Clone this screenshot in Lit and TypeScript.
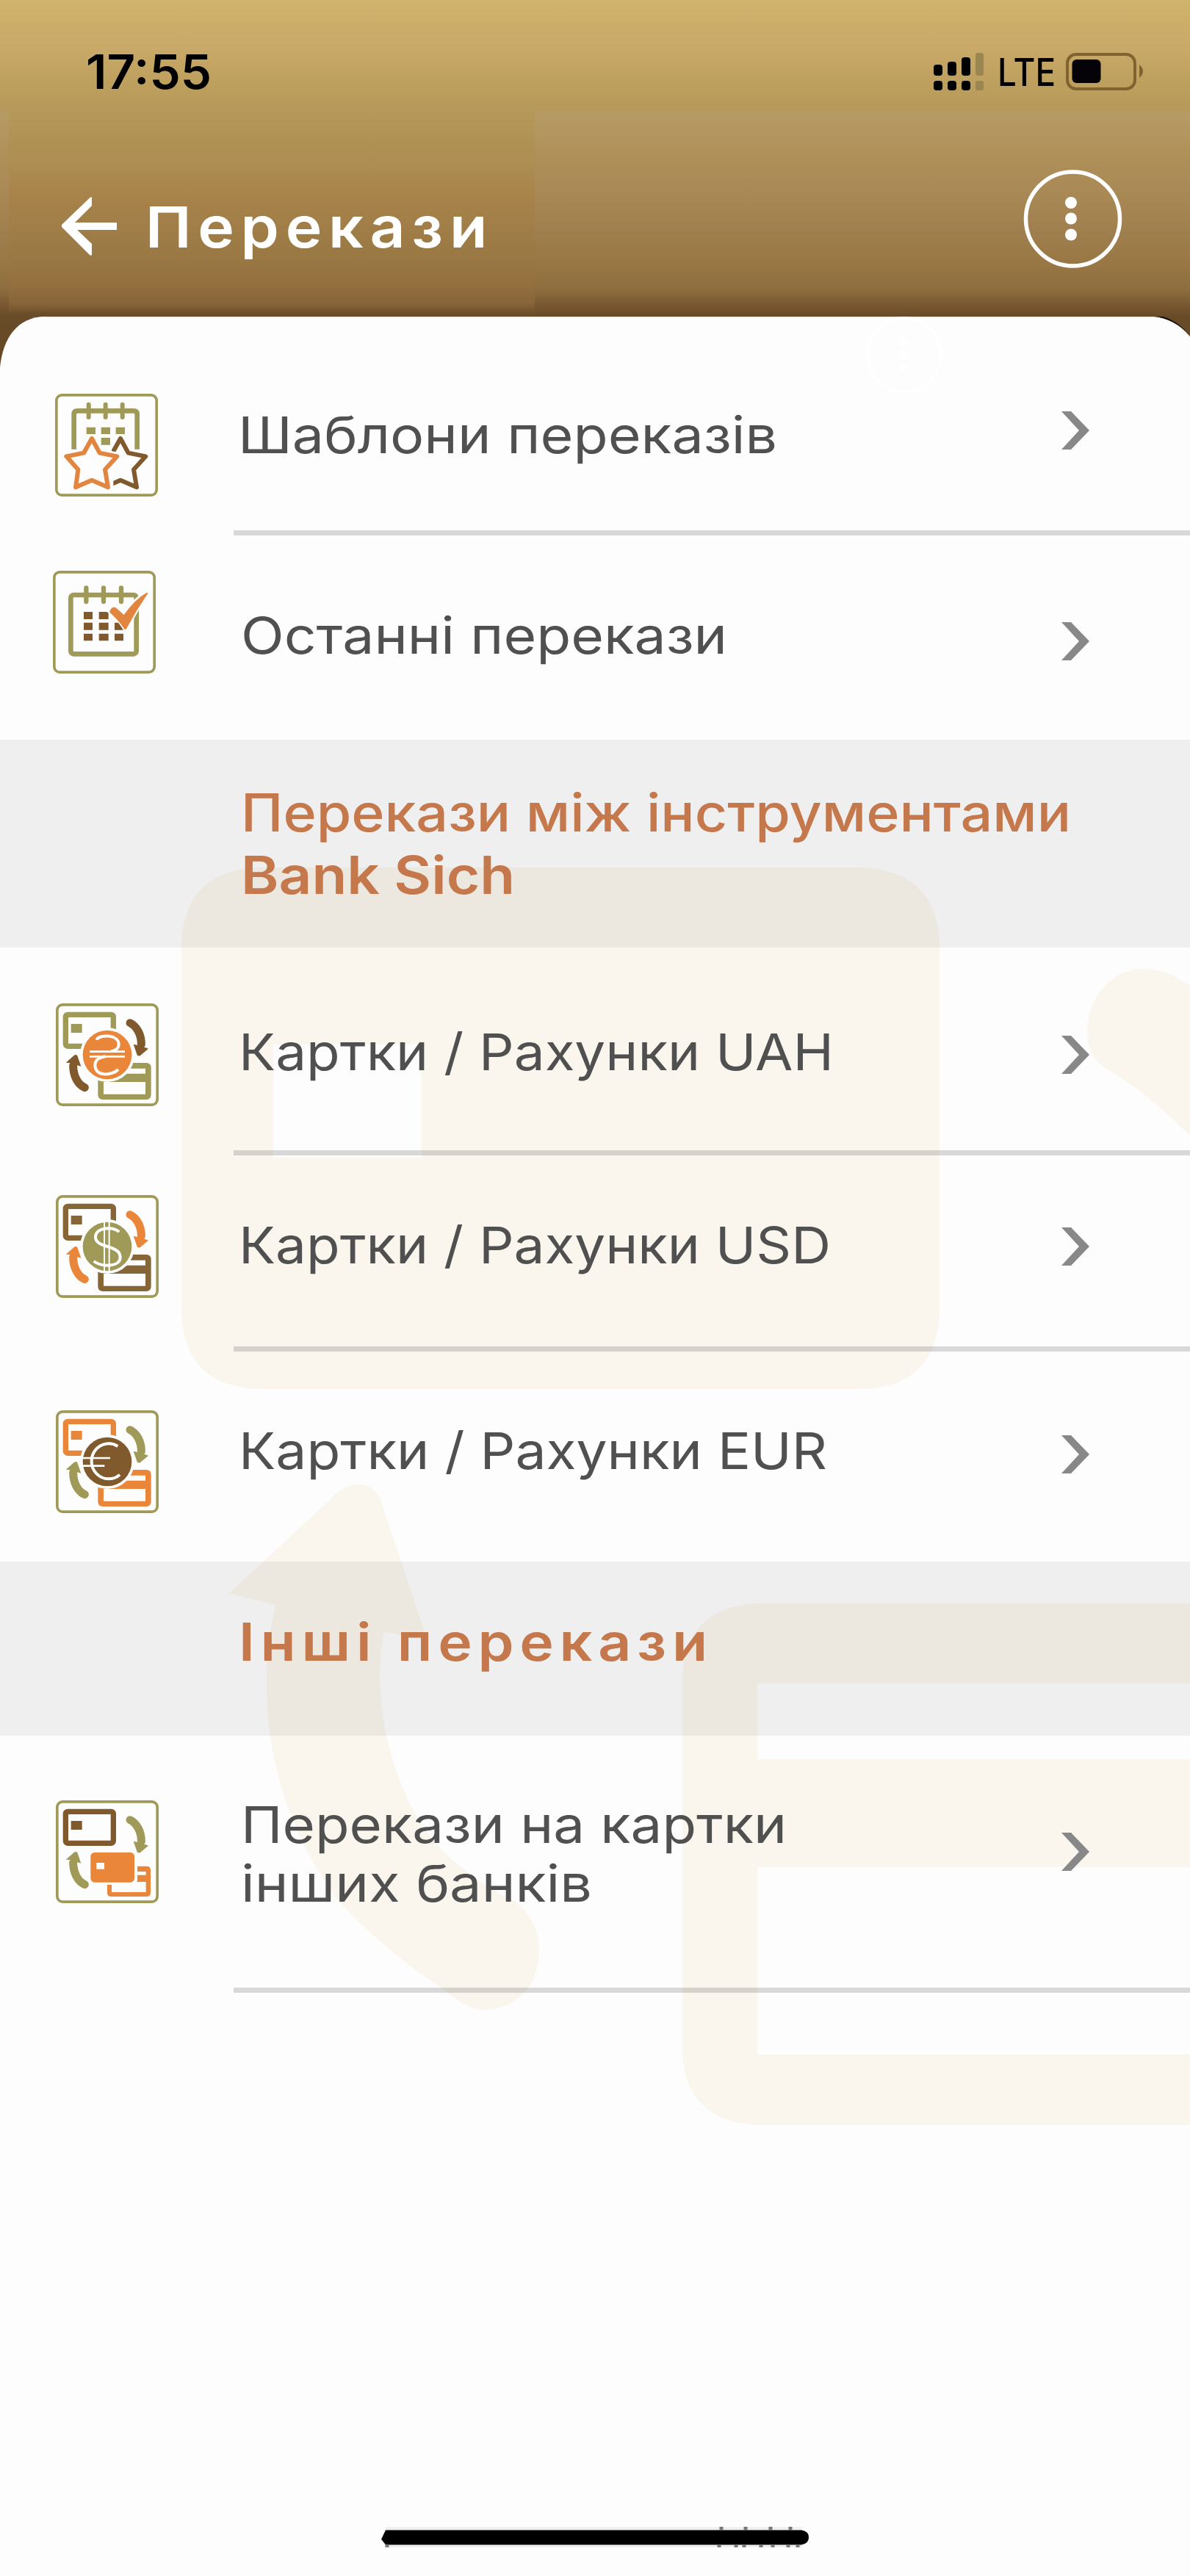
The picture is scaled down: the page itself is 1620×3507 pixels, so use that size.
import { LitElement, html, css, svg, nothing } from "lit";
import { customElement, property } from "lit/decorators.js";

const OLIVE = "#a09a58";
const BROWN = "#80592c";
const UMBER = "#866536";
const ORANGE = "#ea863a";
const PAPER = "#fdfdfd";

/** One line of text stretched horizontally to a known width. */
@customElement("fit-line")
export class FitLine extends LitElement {
  @property({ type: Number }) width = 0;
  static styles = css`
    :host { display: block; white-space: nowrap; }
    .t { display: inline-block; transform-origin: 0 50%; }
  `;
  updated() {
    const el = this.renderRoot.querySelector<HTMLElement>(".t")!;
    el.style.transform = "none";
    const w = el.getBoundingClientRect().width;
    if (w > 0 && this.width > 0) el.style.transform = `scaleX(${this.width / w})`;
  }
  render() {
    return html`<span class="t"><slot></slot></span>`;
  }
}

const frame = svg`<rect x="53.5" y="53.5" width="409" height="409" rx="22" fill="#fdfdfd" stroke=${OLIVE} stroke-width="11"/>`;

const topCard = (c: string) => svg`
  <rect x="88" y="94" width="195" height="129" rx="9" fill="none" stroke=${c} stroke-width="22"/>
  <rect x="110" y="132" width="45" height="36" fill=${c}/>`;

const lowCard = (c: string) => svg`
  <path fill=${c} fill-rule="evenodd" d="M240 291H417Q437 291 437 311V421Q437 441 417 441H240Q220 441 220 421V311Q220 291 240 291ZM243 314V335H414V314ZM243 369V419H414V369Z"/>`;

const arrows = (c: string) => svg`
  <g fill="none" stroke=${c} stroke-width="33" stroke-linecap="round"><path d="M351 128C378 141 398 176 397 216"/><path d="M166 392C138 380 119 344 119 302" /></g>
  <path fill=${c} d="M365 215L382 219L414 229L426 233L394 260Q386 266 380 259Z"/>
  <path fill=${c} d="M151 305L133 300L103 291L89 290L122 261Q131 255 136 262Z"/>`;

const coin = (c: string, mark: unknown) => svg`
  <circle cx="258" cy="258" r="111" fill=${PAPER}/>
  <circle cx="258" cy="258" r="100" fill=${c}/>${mark}`;

const hryvnia = svg`<g fill="none" stroke="#fff">
  <path stroke-width="12" d="M215 197C221 175 305 172 305 216C305 231 291 241 274 244"/>
  <path stroke-width="12" d="M250 265C221 270 208 280 208 300C208 350 278 343 303 318"/>
  <path stroke-width="8" d="M186 245H330M186 265H330"/></g>`;

const dollar = svg`<g fill="none" stroke="#fff">
  <path stroke-width="12" d="M307 198C278 176 210 178 210 220C210 266 311 250 311 302C311 343 236 343 203 318"/>
  <path stroke-width="6" d="M246 157V358M266 157V358"/></g>`;

const euro = svg`<g fill="none" stroke="#fff">
  <path stroke-width="12" d="M301 195A70 72 0 1 0 309 311"/>
  <path stroke-width="8" d="M158 243H270M158 275H247"/></g>`;

const exchange = (card: string, arr: string, disc: string, mark: unknown) => svg`
  ${frame}${topCard(card)}${lowCard(card)}${arrows(arr)}${coin(disc, mark)}`;

const STAR = "M195 231L227 290L298 304L249 358L261 430L195 401L129 430L139 358L91 304L162 290Z";

const icons: Record<string, { box: string; art: unknown }> = {
  templates: {
    box: "45 48 420 420",
    art: svg`
      <clipPath id="c"><path d="M276 0H460V460H283L283 340L276 300Z"/></clipPath>
      <rect x="50.5" y="53.5" width="409" height="409" rx="22" fill="#fdfdfd" stroke=${OLIVE} stroke-width="11"/>
      <path fill="none" stroke=${OLIVE} stroke-width="20" d="M122 275V132Q122 118 136 118H366Q380 118 380 132V275"/>
      <path stroke=${OLIVE} stroke-width="18" stroke-linecap="round" d="M182 92V144M251 92V144M320 92V144"/>
      <path fill=${OLIVE} d="M173 185h37v28h-37zM233 185h37v28h-37zM293 185h37v28h-37zM233 228h37v29h-37z"/>
      <g clip-path="url(#c)"><g transform="translate(117 0)" stroke-linejoin="round">
        <path d=${STAR} fill=${PAPER} stroke=${PAPER} stroke-width="34"/>
        <path d=${STAR} fill="none" stroke=${BROWN} stroke-width="18"/></g></g>
      <path d=${STAR} fill=${PAPER} stroke=${PAPER} stroke-width="34" stroke-linejoin="round"/>
      <path d=${STAR} fill="none" stroke="#e2853e" stroke-width="18" stroke-linejoin="round"/>`,
  },
  recent: {
    box: "36 771 420 420",
    art: svg`
      <rect x="41.5" y="776.5" width="409" height="409" rx="22" fill="#fdfdfd" stroke=${OLIVE} stroke-width="11"/>
      <rect x="109" y="870" width="268" height="241" rx="12" fill="none" stroke=${OLIVE} stroke-width="20"/>
      <path stroke=${OLIVE} stroke-width="19" stroke-linecap="round" d="M172 841V897M243 841V897M315 841V897"/>
      <path fill=${BROWN} d="M162 939h36v30h-36zM224 939h39v30h-39zM162 983h36v30h-36zM224 983h39v30h-39zM288 983h36v30h-36zM162 1028h36v29h-36zM224 1028h39v29h-39zM288 1028h36v29h-36z"/>
      <path stroke=${PAPER} stroke-width="18" fill=${PAPER} d="M268 936Q276 920 290 920L326 951Q372 888 422 860Q375 930 333 1011Q304 962 268 936Z"/>
      <path fill="#e2853e" d="M268 936Q276 917 292 921L326 951Q372 886 420 860Q426 861 422 866Q375 935 336 1008Q332 1014 327 1008Q304 974 270 943Q266 939 268 936Z"/>`,
  },
  uah: { box: "48 48 420 420", art: exchange(OLIVE, BROWN, ORANGE, hryvnia) },
  usd: { box: "48 48 420 420", art: exchange(UMBER, ORANGE, OLIVE, dollar) },
  eur: { box: "48 48 420 420", art: exchange(ORANGE, OLIVE, BROWN, euro) },
  banks: {
    box: "48 48 420 420",
    art: svg`${frame}${topCard(BROWN)}${arrows(OLIVE)}
      <path fill=${ORANGE} fill-rule="evenodd" d="M274 317H419Q435 317 435 333V425Q435 441 419 441H274Q258 441 258 425V333Q258 317 274 317ZM276 339V353H416V339ZM276 381V423H416V381Z"/>
      <rect x="179" y="250" width="202" height="143" rx="20" fill=${PAPER}/>
      <rect x="190" y="261" width="179" height="122" rx="16" fill=${ORANGE}/>
      <rect x="214" y="303" width="32" height="26" fill=${PAPER}/>`,
  },
};

interface Item {
  icon: string;
  height: number;
  iconLeft: number;
  iconTop: number;
  labelTop: number;
  labelLeft: number;
  arrowTop: number;
  lines: [string, number][];
  divider: boolean;
}

const first: Item[] = [
  { icon: "templates", height: 298, iconLeft: 75, iconTop: 105, labelTop: 121, labelLeft: 324, arrowTop: 129, lines: [["Шаблони переказів", 734]], divider: true },
  { icon: "recent", height: 278, iconLeft: 72, iconTop: 48, labelTop: 96, labelLeft: 328, arrowTop: 118, lines: [["Останні перекази", 662]], divider: false },
];
const own: Item[] = [
  { icon: "uah", height: 283, iconLeft: 76, iconTop: 76, labelTop: 102, labelLeft: 325, arrowTop: 120, lines: [["Картки / Рахунки UAH", 810]], divider: true },
  { icon: "usd", height: 267, iconLeft: 76, iconTop: 54, labelTop: 82, labelLeft: 325, arrowTop: 98, lines: [["Картки / Рахунки USD", 806]], divider: true },
  { icon: "eur", height: 286, iconLeft: 76, iconTop: 80, labelTop: 95, labelLeft: 325, arrowTop: 114, lines: [["Картки / Рахунки EUR", 801]], divider: false },
];
const other: Item[] = [
  { icon: "banks", height: 350, iconLeft: 76, iconTop: 88, labelTop: 81, labelLeft: 328, arrowTop: 132, lines: [["Перекази на картки", 743], ["інших банків", 478]], divider: true },
];

@customElement("menu-row")
export class MenuRow extends LitElement {
  @property({ attribute: false }) item!: Item;
  static styles = css`
    :host { display: block; }
    .row {
      box-sizing: border-box; display: grid; grid-template-columns: 318px 1fr 175px;
      height: var(--h); align-items: start; position: relative;
    }
    .icon { display: block; width: 140px; height: 140px; margin: var(--it) 0 0 var(--il); }
    .label {
      margin: var(--lt) 0 0 calc(var(--ll) - 318px);
      font-size: 69px; line-height: 80px; font-weight: 430; color: #505050;
    }
    .go { display: block; width: 38px; height: 52px; margin-top: var(--at); }
    .line { grid-column: 2 / 4; align-self: end; height: 7px; background: rgba(0, 0, 0, 0.147); }
    .row.ruled { grid-template-rows: 1fr 7px; }
  `;
  render() {
    const i = this.item;
    const vars = `--h:${i.height}px;--il:${i.iconLeft}px;--it:${i.iconTop}px;--lt:${i.labelTop}px;--ll:${i.labelLeft}px;--at:${i.arrowTop}px`;
    return html`<div class="row ${i.divider ? "ruled" : ""}" style=${vars}>
      <svg class="icon" viewBox=${icons[i.icon].box}>${icons[i.icon].art}</svg>
      <div class="label">${i.lines.map(([t, w]) => html`<fit-line .width=${w}>${t}</fit-line>`)}</div>
      <svg class="go" viewBox="0 0 38 52"><path d="M0 0H13L38 26L13 52H0L24 26Z" fill="#888"/></svg>
      ${i.divider ? html`<div class="line"></div>` : nothing}
    </div>`;
  }
}

@customElement("app-root")
export class AppRoot extends LitElement {
  static styles = css`
    :host {
      display: block; width: 1620px; height: 3507px; overflow: hidden;
      font-family: Inter, "Open Sans", "Liberation Sans", sans-serif; background: #fdfdfd;
    }
    .page { position: relative; display: flex; flex-direction: column; height: 3507px; }
    .top {
      height: 520px; margin-bottom: -89px; flex: none;
      background: linear-gradient(#d0b36c 0, #c8a967 66px, #ba9c5b 140px, #b79b65 151px, #b09159 205px,
        #a98955 260px, #a1804f 310px, #977644 365px, #8d6c3e 395px, #785831 415px, #684b28 431px, #65471f 520px);
    }
    .status {
      box-sizing: border-box; height: 151px; padding: 59px 64px 0 117px;
      display: flex; align-items: flex-start; color: #000;
      background: linear-gradient(#d0b36c, #c8a967 66px, #ba9c5b 130px, #b6995b 151px);
    }
    .time { font-size: 64px; line-height: 78px; font-weight: 600; flex: 1; }
    .signal { display: block; width: 70px; height: 54px; margin-top: 12px; }
    .lte { font-size: 52px; line-height: 60px; font-weight: 500; margin: 10px 0 0 18px; width: 92px; }
    .battery { display: block; width: 106px; height: 54px; margin-top: 11px; }
    .nav {
      box-sizing: border-box; height: 274px; margin-left: 12px; padding: 0 92px 0 72px;
      display: flex; align-items: flex-start;
      background: linear-gradient(#b6985a, #ac8c50 80px, #a9844b 108px, #a27f48 150px, #987743 205px, #95703f 236px, #87653a 262px, #70532b 274px) 0 0 / 716px 274px no-repeat;
    }
    .back { display: block; width: 76px; height: 82px; margin-top: 116px; }
    .title { flex: 1; margin: 103px 0 0 38px; color: #fff; font-size: 77px; line-height: 110px; font-weight: 560; letter-spacing: 8px; }
    .more { display: block; width: 136px; height: 136px; margin-top: 79px; }
    .sheet { flex: 1; position: relative; }
    .back-art { position: absolute; left: 0; top: 0; width: 1620px; height: 3076px; display: block; }
    .body { position: relative; display: flex; flex-direction: column; height: 100%; }
    .band { box-sizing: border-box; background: rgba(0, 0, 0, 0.055); color: #c4784c; font-size: 71px; line-height: 85px; }
    .band.a { height: 283px; padding: 57px 0 0 328px; font-weight: 450; }
    .band.b { height: 237px; padding: 67px 0 0 325px; font-weight: 560; letter-spacing: 7px; }
    .strong { font-weight: 560; }
    .home { display: block; width: 590px; height: 36px; margin: auto auto 33px 516px; }
  `;

  render() {
    return html`<div class="page">
      <div class="top">
        <div class="status">
          <div class="time"><fit-line .width=${171}>17:55</fit-line></div>
          <svg class="signal" viewBox="1270 71 70 54">
            <rect x="1271" y="88" width="12" height="15" rx="4"/><rect x="1290" y="84" width="12" height="19" rx="4"/><rect x="1309" y="78" width="12" height="25" rx="4"/>
            <rect x="1271" y="110" width="12" height="13" rx="4"/><rect x="1290" y="110" width="12" height="13" rx="4"/><rect x="1309" y="110" width="12" height="13" rx="4"/>
            <g fill="#9b8650"><rect x="1328" y="72" width="11" height="31" rx="3"/><rect x="1328" y="110" width="11" height="13" rx="3"/></g>
          </svg>
          <div class="lte"><fit-line .width=${79}>LTE</fit-line></div>
          <svg class="battery" viewBox="1450 70 106 54">
            <rect x="1453" y="74" width="92" height="47" rx="12" fill="none" stroke="#80632f" stroke-width="4"/>
            <rect x="1459.500" y="81" width="39" height="32" rx="6" fill="#050208"/>
            <path d="M1551 88Q1556 92 1556 97T1551 106Z" fill="#80632f"/>
          </svg>
        </div>
        <div class="nav">
          <svg class="back" viewBox="84 267 76 82"><path d="M84 306L123 268.500H125V280L102 303H159V313H105L125 332V347.500H122.500L84 309Z" fill="#fff"/></svg>
          <div class="title"><fit-line .width=${474}>Перекази</fit-line></div>
          <svg class="more" viewBox="1392 230 136 136"><circle cx="1460.500" cy="298" r="64" fill="none" stroke="#fff" stroke-width="5.500"/><g fill="#fff"><circle cx="1458" cy="276" r="8"/><circle cx="1458" cy="297.500" r="8"/><circle cx="1458" cy="319.500" r="8"/></g></svg>
        </div>
      </div>
      <div class="sheet">
        <svg class="back-art" viewBox="0 431 1620 3076">
          <path d="M1570 431Q1602 434 1622 465" fill="none" stroke="#1a1208" stroke-width="5"/>
          <path d="M0 3507V500C4 460 24 431 62 431H1570Q1600 434 1620 458V3507Z" fill=${PAPER}/>
          <path d="M62 431.500H1570" stroke="#e4ddd2" stroke-width="1"/>
          <g fill="none" stroke="#fff" stroke-width="4"><circle cx="1231" cy="483" r="50"/></g>
          <g fill="#fff"><circle cx="1230" cy="466" r="6"/><circle cx="1230" cy="483" r="6"/><circle cx="1230" cy="500" r="6"/></g>
          <g fill="#faf6ee" fill-rule="evenodd">
            <path d="M354 1181H1172Q1279 1185 1279 1292V1780Q1279 1888 1172 1891H354Q247 1888 247 1780V1292Q247 1185 354 1181ZM372 1422V1576H574V1422Z"/>
            <path d="M1620 1342C1600 1328 1580 1319 1557 1319C1513 1319 1480 1358 1480 1405C1480 1432 1493 1450 1515 1460C1557 1487 1590 1516 1620 1546Z"/>
            <path d="M312 2169L452 2039C474 2014 508 2014 519 2044L582 2234L523 2221C511 2277 516 2360 551 2440C578 2503 622 2545 680 2578C714 2590 734 2620 734 2655C734 2705 700 2736 660 2736C636 2736 616 2718 598 2704C545 2670 500 2630 460 2587C370 2465 345 2320 375 2185Z"/>
            <path d="M1620 2183H1033Q929 2187 929 2290V2786Q929 2889 1033 2893H1620V2797H1031V2542H1620V2395H1031V2292H1620Z"/>
          </g>
        </svg>
        <div class="body">
          ${first.map((i) => html`<menu-row .item=${i}></menu-row>`)}
          <div class="band a">
            <fit-line .width=${1130}>Перекази між інструментами</fit-line>
            <fit-line class="strong" .width=${373}>Bank Sich</fit-line>
          </div>
          ${own.map((i) => html`<menu-row .item=${i}></menu-row>`)}
          <div class="band b"><fit-line .width=${646}>Інші перекази</fit-line></div>
          ${other.map((i) => html`<menu-row .item=${i}></menu-row>`)}
          <svg class="home" viewBox="516 3438 590 36">
            <path d="M525 3442H1092" stroke="#eee" stroke-width="3"/><path d="M525 3466.500H1092" stroke="#eee" stroke-width="3"/>
            <path d="M525 3444.500H1091Q1101 3446 1101 3454.500T1091 3464.500H525L519 3457Z" fill="#000"/>
            <path stroke="#777" stroke-width="5" d="M982 3440v5M1015 3440v5M1049 3440v5M1076 3440v5M979 3464v4M1002 3464v4M1013 3464v4M1036 3464v4M1052 3464v4M1073 3464v4M1086 3464v4M527 3464v4"/>
          </svg>
        </div>
      </div>
    </div>`;
  }
}
